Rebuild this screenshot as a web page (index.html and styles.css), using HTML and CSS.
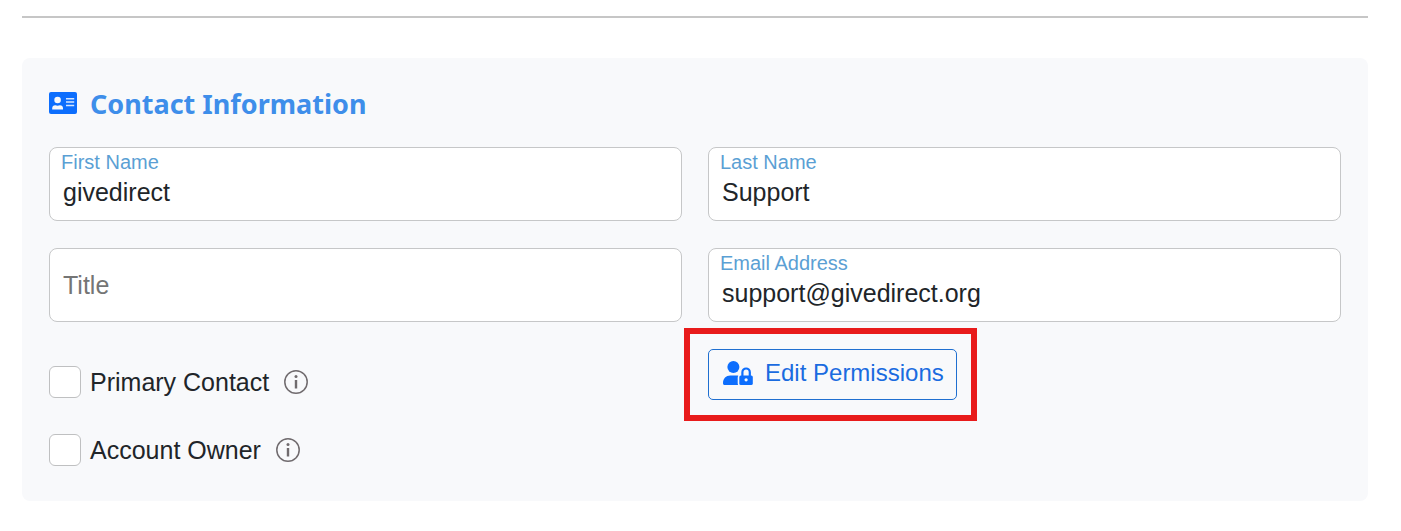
FILE: index.html
```html
<!DOCTYPE html>
<html lang="en">
<head>
<meta charset="utf-8">
<title>Contact Information</title>
<link rel="stylesheet" href="styles.css">
</head>
<body>
<hr class="divider">
<form class="card">
  <h2 class="card-title">
    <svg class="card-icon" viewBox="0 0 28 22" aria-hidden="true">
      <rect width="28" height="22" rx="2" fill="#0d6efd"/>
      <circle cx="8.6" cy="8" r="3.3" fill="#f8f9fb"/>
      <path d="M3.2 17.4v-1.2c0-1.8 1.2-3 3-3 1.500.6 3.300.6 4.800 0 1.800 0 3 1.200 3 3v1.200z" fill="#f8f9fb"/>
      <path d="M17 6.700h8.200M17 10h8.200M17 13.500h8.200" stroke="#d5e6ff" stroke-width="1.500"/>
    </svg>
    Contact Information
  </h2>
  <div class="grid">
    <div class="field">
      <label class="field-label" for="first">First Name</label>
      <input class="field-input" id="first" type="text" value="givedirect">
    </div>
    <div class="field">
      <label class="field-label" for="last">Last Name</label>
      <input class="field-input" id="last" type="text" value="Support">
    </div>
    <div class="field field-empty">
      <input class="field-input" id="title" type="text" placeholder="Title" aria-label="Title">
    </div>
    <div class="field">
      <label class="field-label" for="email">Email Address</label>
      <input class="field-input" id="email" type="email" value="support@givedirect.org">
    </div>
    <div class="checks">
      <div class="check-row">
        <input class="check" type="checkbox" id="primary">
        <label class="check-label" for="primary">Primary Contact</label>
        <svg class="info" viewBox="0 0 24 24" role="img" aria-label="About primary contact">
          <circle cx="12" cy="12" r="11.200" fill="none" stroke="#706b6e" stroke-width="1.500"/>
          <circle cx="12" cy="6.500" r="1.500" fill="#706b6e"/>
          <path d="M12 10v8.500" stroke="#706b6e" stroke-width="2.400"/>
        </svg>
      </div>
      <div class="check-row">
        <input class="check" type="checkbox" id="owner">
        <label class="check-label" for="owner">Account Owner</label>
        <svg class="info" viewBox="0 0 24 24" role="img" aria-label="About account owner">
          <circle cx="12" cy="12" r="11.200" fill="none" stroke="#706b6e" stroke-width="1.500"/>
          <circle cx="12" cy="6.500" r="1.500" fill="#706b6e"/>
          <path d="M12 10v8.500" stroke="#706b6e" stroke-width="2.400"/>
        </svg>
      </div>
    </div>
    <div class="actions">
      <div class="highlighted">
        <button class="button" type="button">
          <svg class="button-icon" viewBox="0 0 30 24" aria-hidden="true">
            <circle cx="10.400" cy="6" r="6" fill="#0d6efd"/>
            <path d="M0 22.200c0-4.700 3.100-7.700 7.300-7.700h6.400c.6 0 1.100 0 1.600.2-.4.600-.6 1.300-.6 2.100v5.200c0 .7.100 1.300.4 2H1.600C.7 24 0 23.300 0 22.200z" fill="#0d6efd"/>
            <rect x="16.300" y="14.500" width="13.500" height="9.500" rx="1.600" fill="#0d6efd"/>
            <path d="M19.400 15v-3.800a3.700 3.700 0 0 1 7.400 0V15" fill="none" stroke="#0d6efd" stroke-width="2.200"/>
            <circle cx="23.100" cy="18.800" r="1.600" fill="#f8f9fb"/>
          </svg>
          Edit Permissions
        </button>
      </div>
    </div>
  </div>
</form>
</body>
</html>
```
FILE: styles.css
```css
* {
  box-sizing: border-box;
}

body {
  margin: 0;
  padding: 16px 33px 30px 22px;
  background: #fff;
  color: #212529;
  font-family: "Liberation Sans", Arial, sans-serif;
  font-size: 25px;
}

.divider {
  height: 2px;
  margin: 0 0 40px;
  border: 0;
  background: #c6c6c6;
}

.card {
  padding: 26px 27px 35px;
  border-radius: 8px;
  background: #f8f9fb;
}

.card-title {
  display: flex;
  align-items: center;
  gap: 13px;
  margin: 0 0 23px;
  color: #3e8eea;
  font: 700 27px/40px "Noto Sans", "Open Sans", sans-serif;
}

.card-icon {
  width: 28px;
  height: 22px;
  margin-bottom: 2px;
}

.grid {
  display: grid;
  grid-template-columns: 1fr 1fr;
  gap: 27px 26px;
}

.field {
  display: flex;
  flex-direction: column;
  height: 74px;
  padding: 2px 11px 0;
  border: 1px solid #c6c7c8;
  border-radius: 8px;
  background: #fff;
}

.field:focus-within {
  border-color: #0d6efd;
}

.field-label {
  color: #5b9fd4;
  font-size: 20px;
  line-height: 24px;
}

.field-input {
  width: 100%;
  padding: 0 2px;
  border: 0;
  outline: 0;
  background: transparent;
  color: #212529;
  font: inherit;
  line-height: 36px;
}

.field-input::placeholder {
  color: #757575;
  opacity: 1;
}

.field-empty {
  justify-content: center;
  padding-top: 0;
}

.checks {
  display: flex;
  flex-direction: column;
  gap: 36px;
  padding-top: 17px;
}

.check-row {
  display: flex;
  align-items: center;
  height: 32px;
}

.check {
  appearance: none;
  width: 32px;
  height: 32px;
  margin: 0 9px 0 0;
  border: 1px solid #bfc0c1;
  border-radius: 6px;
  background: #fff;
}

.check:checked {
  background: #0d6efd;
}

.info {
  width: 24px;
  height: 24px;
  margin-left: 15px;
}

.actions {
  display: flex;
  align-items: flex-start;
}

.highlighted {
  position: relative;
}

.highlighted::after {
  content: "";
  position: absolute;
  inset: -21px -20px -21px -24px;
  border: 6px solid #e81b1b;
  pointer-events: none;
}

.button {
  display: flex;
  align-items: center;
  gap: 12px;
  height: 51px;
  padding: 0 12px 3px 14px;
  border: 1px solid #1f6fd0;
  border-radius: 5px;
  background: transparent;
  color: #1a6be0;
  font: inherit;
  font-size: 24px;
}

.button-icon {
  width: 30px;
  height: 24px;
}
```
